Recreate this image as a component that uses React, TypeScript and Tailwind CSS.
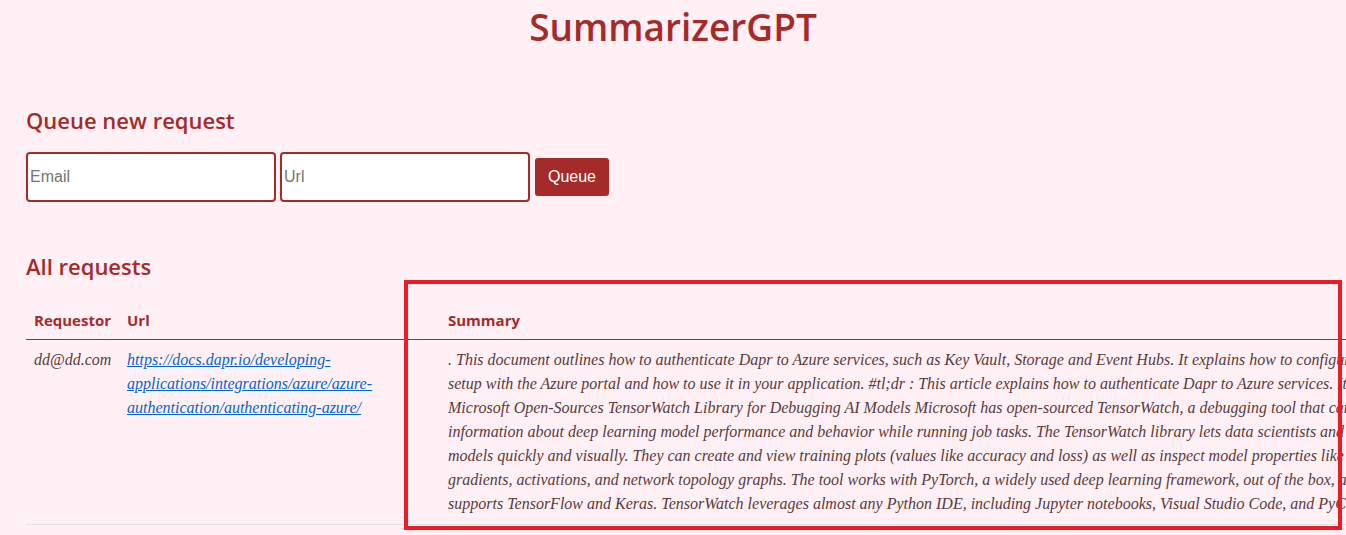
import React from 'react';

const summaryLines = [
  '. This document outlines how to authenticate Dapr to Azure services, such as Key Vault, Storage and Event Hubs. It explains how to configure the Azure AD application',
  'setup with the Azure portal and how to use it in your application. #tl;dr : This article explains how to authenticate Dapr to Azure services. It covers',
  'Microsoft Open-Sources TensorWatch Library for Debugging AI Models Microsoft has open-sourced TensorWatch, a debugging tool that can provide',
  'information about deep learning model performance and behavior while running job tasks. The TensorWatch library lets data scientists and developers debug',
  'models quickly and visually. They can create and view training plots (values like accuracy and loss) as well as inspect model properties like weights,',
  'gradients, activations, and network topology graphs. The tool works with PyTorch, a widely used deep learning framework, out of the box, and also',
  'supports TensorFlow and Keras. TensorWatch leverages almost any Python IDE, including Jupyter notebooks, Visual Studio Code, and PyCharm.',
];

const App: React.FC = () => {
  return (
    <div className="relative w-full h-[535px] overflow-hidden bg-[#fff0f5] text-[#a52a2a] font-['Open_Sans',sans-serif]">
      <h1 className="text-center text-[37px] font-semibold leading-[54px]">SummarizerGPT</h1>

      <div className="px-[26px]">
        <h2 className="mt-[50px] text-[22px] font-semibold leading-[32px]">Queue new request</h2>
        <div className="mt-[16px] flex items-center gap-[4px] font-['Liberation_Sans',sans-serif]">
          <input
            placeholder="Email"
            className="w-[250px] h-[50px] bg-white border-2 border-[#a52a2a] rounded-[4px] px-[2px] text-base text-black placeholder:text-[#757575] outline-none"
          />
          <input
            placeholder="Url"
            className="w-[250px] h-[50px] bg-white border-2 border-[#a52a2a] rounded-[4px] px-[2px] text-base text-black placeholder:text-[#757575] outline-none"
          />
          <button className="ml-[1px] w-[74px] h-[38px] bg-[#a52a2a] text-white text-base rounded-[3px]">Queue</button>
        </div>

        <h2 className="mt-[48px] text-[22px] font-semibold leading-[32px]">All requests</h2>

        <table className="mt-[8px] w-[1500px] table-fixed border-collapse text-left">
          <colgroup>
            <col className="w-[93px]" />
            <col className="w-[321px]" />
            <col />
          </colgroup>
          <thead>
            <tr className="border-b border-[#a52a2a]">
              <th className="px-2 pt-[18px] pb-[7px] text-[15px] font-bold leading-6">Requestor</th>
              <th className="px-2 pt-[18px] pb-[7px] text-[15px] font-bold leading-6">Url</th>
              <th className="px-2 pt-[18px] pb-[7px] text-[15px] font-bold leading-6">Summary</th>
            </tr>
          </thead>
          <tbody>
            <tr className="border-b border-[#dee2e6] align-top font-['Liberation_Serif',serif] italic text-base leading-6">
              <td className="p-2 text-[#5a3a3a] whitespace-nowrap">dd@dd.com</td>
              <td className="p-2">
                <a href="#" className="text-[#0066cc] underline">
                  https://docs.dapr.io/developing-
                  <br />
                  applications/integrations/azure/azure-
                  <br />
                  authentication/authenticating-azure/
                </a>
              </td>
              <td className="p-2 whitespace-nowrap text-[#5a3a3a]">
                {summaryLines.map((line, i) => (
                  <div key={i}>{line}</div>
                ))}
              </td>
            </tr>
          </tbody>
        </table>
      </div>

      <div className="absolute left-[404px] top-[280px] w-[938px] h-[250px] border-4 border-[#ed1c24] pointer-events-none" />
    </div>
  );
};

export default App;
